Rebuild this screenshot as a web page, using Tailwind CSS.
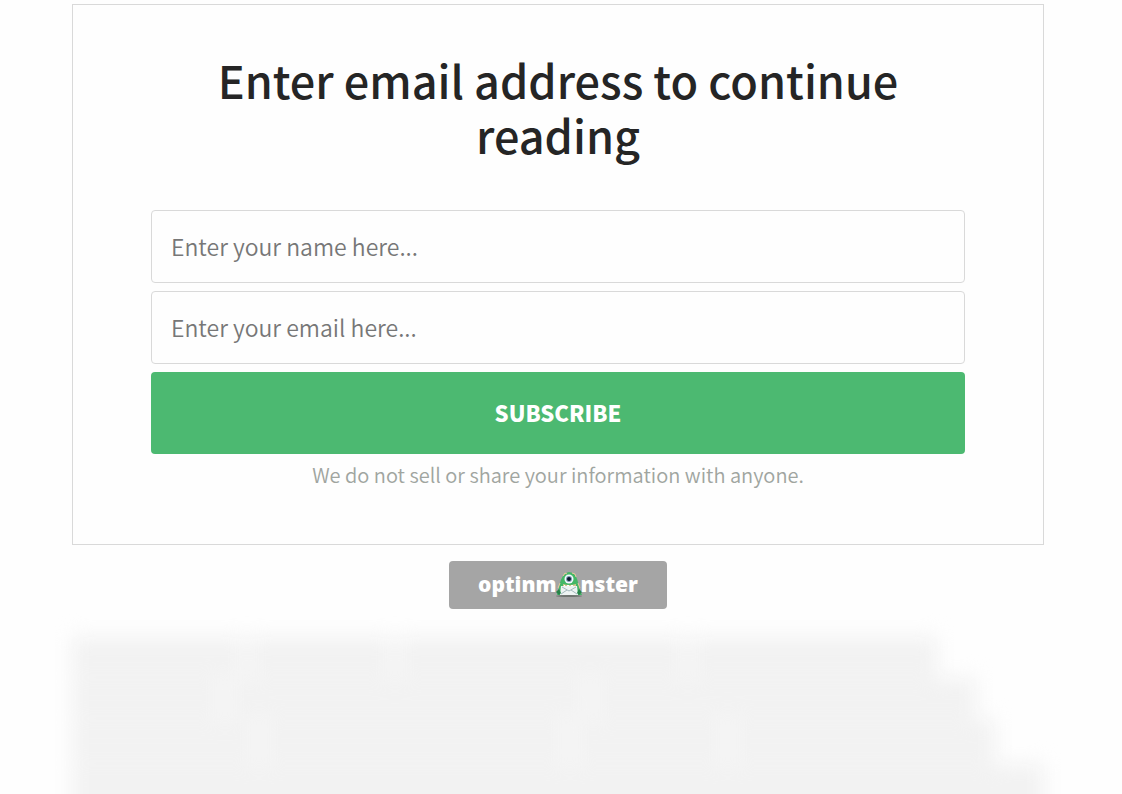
<!DOCTYPE html>
<html lang="en">
<head>
  <meta charset="UTF-8" />
  <meta name="viewport" content="width=device-width, initial-scale=1.0" />
  <title>Enter email address to continue reading</title>
  <script src="https://cdn.jsdelivr.net/npm/@tailwindcss/browser@4"></script>
</head>
<body class="bg-[#fefefe] font-['Noto_Sans_CJK_SC','Source_Sans_Pro',sans-serif] h-screen flex flex-col overflow-hidden pt-1 pl-[72px] pr-[78px]">

  <main class="shrink-0 border border-[#d9d9d9] px-[78px] pt-[47px] pb-14">
    <h1 class="text-[45px] leading-[55px] font-medium text-center text-[#252525]">Enter email address to continue reading</h1>

    <form class="mt-12 flex flex-col gap-2">
      <input type="text" aria-label="Name" placeholder="Enter your name here..." class="w-full h-[73px] px-[19px] pb-0.5 border border-[#d9d9d9] rounded text-[23px] font-[350] placeholder:text-[#777777]" />
      <input type="email" aria-label="Email" placeholder="Enter your email here..." class="w-full h-[73px] px-[19px] pb-0.5 border border-[#d9d9d9] rounded text-[23px] font-[350] placeholder:text-[#777777]" />
      <button type="submit" class="w-full h-[82px] pb-0.5 rounded bg-[#4cb971] text-white text-[22px] font-black">SUBSCRIBE</button>
    </form>

    <p class="mt-2 text-[20px] leading-[26px] font-[350] text-center text-[#a0a5a0]">We do not sell or share your information with anyone.</p>
  </main>

  <a href="#" class="shrink-0 mt-4 self-center w-[218px] h-12 rounded bg-[#a5a5a5] flex items-center justify-center text-white text-[21px] font-['Open_Sans',sans-serif] font-extrabold">
    <span>optinm</span>
    <svg class="w-7 h-7 -mx-0.5" viewBox="0 0 28 28" fill="none" aria-hidden="true">
      <ellipse cx="14" cy="25" rx="13" ry="1" fill="#6f7470" />
      <path d="M7 24 L2 24 L4 17 Q5 8 9 4 Q12 1 14 1 Q17 1 20 4 Q23 8 24 17 L27 24 Z" fill="#43b766" />
      <path d="M8 5 L10 2 L12 3 M17 2 L20 3 L21 6 M5 12 L3 17 M23 12 L25 17" stroke="#e4c99a" />
      <circle cx="14" cy="8" r="4.5" fill="#f4faff" />
      <circle cx="14" cy="8" r="3" fill="#7d9db5" />
      <circle cx="14" cy="8" r="2" fill="#101a2c" />
      <path d="M8 13 Q14 15 21 13 L21 16 H8 Z" fill="#d8c68e" />
      <path d="M9 14 L11 16 L13 14 L15 16 L17 14 L19 16" stroke="#fff" />
      <path d="M6 15 H22 L23 24 H5 Z" fill="#eef4f3" />
      <path d="M7 16 L14 20 L21 16 M6 23 L12 19 M22 23 L16 19" stroke="#a3b9bc" />
      <path d="M1 21 L4 18 L6 22 L4 24 Z M27 21 L24 18 L22 22 L24 24 Z" fill="#268348" />
    </svg>
    <span>nster</span>
  </a>

  <!-- locked article -->
  <section class="mt-7 shrink-0 flex flex-col gap-px blur-[10px]" aria-hidden="true">
    <div class="w-[89%] h-10 flex gap-1">
      <div class="w-1/5 bg-[#f2f2f2]"></div>
      <div class="w-1/6 bg-[#f2f2f2]"></div>
      <div class="w-1/3 bg-[#f2f2f2]"></div>
      <div class="grow bg-[#f2f2f2]"></div>
    </div>
    <div class="w-[93%] h-10 flex gap-1">
      <div class="w-1/6 bg-[#f2f2f2]"></div>
      <div class="w-2/5 bg-[#f2f2f2]"></div>
      <div class="grow bg-[#f2f2f2]"></div>
    </div>
    <div class="w-[95%] h-11 flex gap-1">
      <div class="w-1/5 bg-[#f2f2f2]"></div>
      <div class="w-1/3 bg-[#f2f2f2]"></div>
      <div class="w-1/6 bg-[#f2f2f2]"></div>
      <div class="grow bg-[#f2f2f2]"></div>
    </div>
    <div class="w-full h-20 bg-[#f2f2f2]"></div>
  </section>

</body>
</html>
